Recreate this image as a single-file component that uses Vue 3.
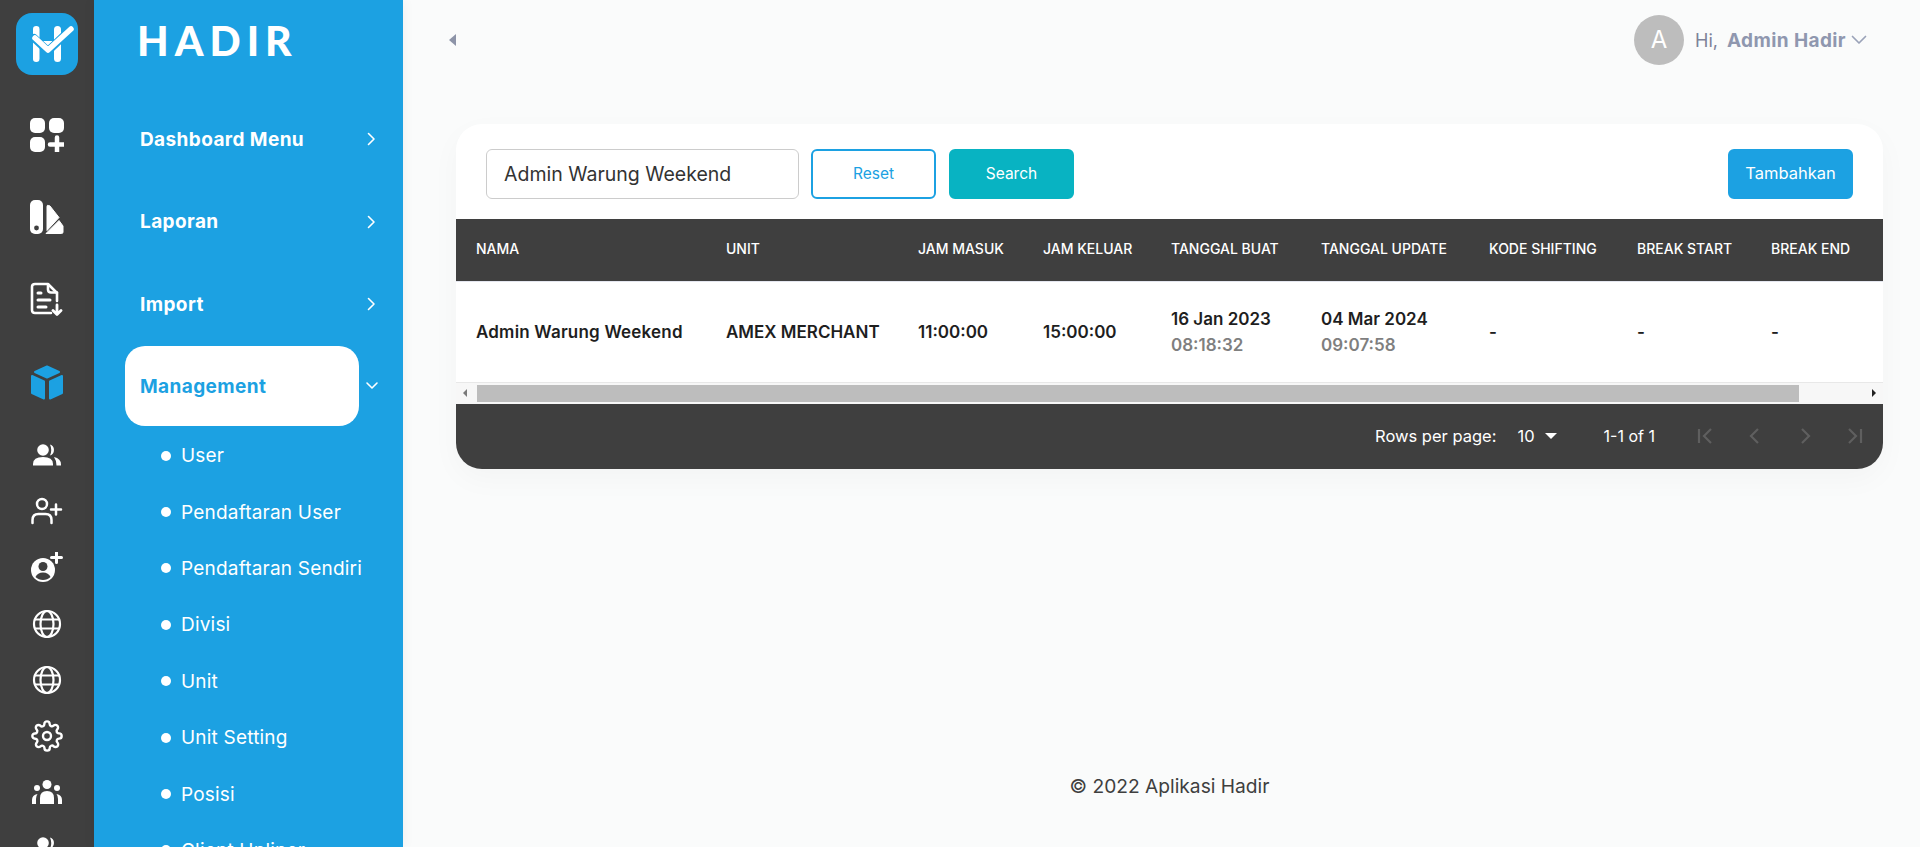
<template>
  <div class="layout">
    <nav class="rail">
      <div class="logo">
        <svg width="62" height="62" viewBox="0 0 62 62">
          <rect x="17" y="13" width="6.500" height="36" rx="3.200" fill="#fff" />
          <rect x="38" y="13" width="7" height="36" rx="3.500" fill="#fff" />
          <path d="M26 28h11l-5.500 5z" fill="#fff" />
          <path d="M18 25l14 13 23-22" fill="none" stroke="#1ca1e2" stroke-width="8" stroke-linecap="round" stroke-linejoin="round" />
          <path d="M19 25l13 12 23-21" fill="none" stroke="#fff" stroke-width="5.500" stroke-linecap="round" stroke-linejoin="round" />
        </svg>
      </div>

      <div class="rail-big">
        <svg width="34" height="34" viewBox="0 0 34 34" fill="#fff">
          <rect width="15" height="15" rx="5" />
          <rect x="19" width="15" height="15" rx="5" />
          <rect y="19" width="15" height="15" rx="5" />
          <path d="M20 26.500h14M27 19.500v14" stroke="#fff" stroke-width="4.500" stroke-linecap="round" />
        </svg>
      </div>
      <div class="rail-big">
        <svg width="34" height="34" viewBox="0 0 34 34" fill="#fff">
          <rect width="13" height="34" rx="5" />
          <circle cx="6.500" cy="28" r="2.400" fill="#3f3f3f" />
          <path d="M17 6.500q0-1.800 1.700-1L20 6l9 11.500-12 13z" stroke="#fff" stroke-linejoin="round" />
          <path d="M16 33.500l13-13 4 5.500v6q0 1.500-1.500 1.500z" stroke="#fff" stroke-linejoin="round" />
        </svg>
      </div>
      <div class="rail-big">
        <svg width="34" height="34" viewBox="0 0 34 34" fill="none" stroke="#fff" stroke-width="2.600" stroke-linecap="round" stroke-linejoin="round">
          <path d="M21 31H5q-3 0-3-3V5q0-3 3-3h13l9 9v8" />
          <path d="M18 2.500v5q0 3 3 3h6" />
          <path d="M8 11h3M8 18h12M8 25h8" stroke-width="3" />
          <path d="M27 23v9M23 28.500l4 4 4-4" stroke-width="2.800" />
        </svg>
      </div>
      <div class="rail-big">
        <svg class="cube" width="34" height="36" viewBox="0 0 34 36" fill="#1ca1e2" stroke="#1ca1e2" stroke-width="2" stroke-linejoin="round">
          <path d="M17 1.500l12 5.500-12 5.500L5 7z" />
          <path d="M2 11l12 5.500v17L2 28z" />
          <path d="M32 11l-12 5.500v17L32 28z" />
        </svg>
      </div>

      <div class="rail-small">
        <svg width="30" height="22" viewBox="0 0 30 22" fill="#fff">
          <circle cx="11" cy="6" r="5.800" />
          <path d="M1 20q0-7 10-7t10 7v1.500H1z" />
          <path d="M18 .5a5.800 5.800 0 0 1 0 11q2.500-5.500 0-11zM22 13q7 1.500 7 7.500v1h-4.500q0-5-2.500-8.500z" />
        </svg>
      </div>
      <div class="rail-small">
        <svg width="32" height="28" viewBox="0 0 32 28" fill="none" stroke="#fff" stroke-width="2.500" stroke-linecap="round">
          <circle cx="11" cy="7" r="5" />
          <path d="M1.500 26v-3q0-6 6-6h7q6 0 6 6v3" />
          <path d="M20 12.500h10M25 7.500v10" />
        </svg>
      </div>
      <div class="rail-small">
        <svg width="32" height="30" viewBox="0 0 32 30">
          <circle cx="12" cy="18" r="12" fill="#fff" />
          <circle cx="12" cy="14.500" r="4.500" fill="#3f3f3f" />
          <path d="M4.500 25q2-4.500 7.500-4.500T19.500 25q-3 3-7.500 3t-7.500-3z" fill="#3f3f3f" />
          <path d="M20.500 5.500h10M25.500 .5v10" stroke="#fff" stroke-width="3" stroke-linecap="round" />
        </svg>
      </div>
      <div v-for="n in 2" :key="n" class="rail-small">
        <svg width="30" height="30" viewBox="0 0 30 30" fill="none" stroke="#fff" stroke-width="2.200">
          <circle cx="15" cy="15" r="13" />
          <ellipse cx="15" cy="15" rx="6.500" ry="13" />
          <path d="M3 10.500h24M3 19.500h24" />
        </svg>
      </div>
      <div class="rail-small">
        <svg width="32" height="32" viewBox="0 0 24 24" fill="none" stroke="#fff" stroke-width="1.800" stroke-linejoin="round">
          <circle cx="12" cy="12" r="3" />
          <path d="M19.400 15a1.650 1.650 0 0 0 .33 1.820l.06.06a2 2 0 0 1 0 2.830 2 2 0 0 1-2.830 0l-.06-.06a1.650 1.650 0 0 0-1.820-.33 1.650 1.650 0 0 0-1 1.510V21a2 2 0 0 1-2 2 2 2 0 0 1-2-2v-.09A1.650 1.650 0 0 0 9 19.400a1.650 1.650 0 0 0-1.820.33l-.06.06a2 2 0 0 1-2.830 0 2 2 0 0 1 0-2.830l.06-.06a1.650 1.650 0 0 0 .33-1.820 1.650 1.650 0 0 0-1.510-1H3a2 2 0 0 1-2-2 2 2 0 0 1 2-2h.09A1.650 1.650 0 0 0 4.600 9a1.650 1.650 0 0 0-.33-1.820l-.06-.06a2 2 0 0 1 0-2.830 2 2 0 0 1 2.830 0l.06.06a1.650 1.650 0 0 0 1.820.33H9a1.650 1.650 0 0 0 1-1.510V3a2 2 0 0 1 2-2 2 2 0 0 1 2 2v.09a1.650 1.650 0 0 0 1 1.510 1.650 1.650 0 0 0 1.820-.33l.06-.06a2 2 0 0 1 2.830 0 2 2 0 0 1 0 2.830l-.06.06a1.650 1.650 0 0 0-.33 1.820V9a1.650 1.650 0 0 0 1.510 1H21a2 2 0 0 1 2 2 2 2 0 0 1-2 2h-.09a1.650 1.650 0 0 0-1.510 1z" />
        </svg>
      </div>
      <div class="rail-small">
        <svg width="30" height="24" viewBox="0 0 30 24" fill="#fff">
          <circle cx="15" cy="4.500" r="4.500" />
          <circle cx="5" cy="8" r="3" />
          <circle cx="25" cy="8" r="3" />
          <path d="M8 24v-6q0-7 7-7t7 7v6z" />
          <path d="M0 24v-4q0-5 5.500-6-1.500 2-1.500 5v5zM30 24v-4q0-5-5.500-6 1.500 2 1.500 5v5z" />
        </svg>
      </div>
      <div class="rail-small">
        <svg width="30" height="22" viewBox="0 0 30 22" fill="#fff">
          <circle cx="11" cy="6" r="5.800" />
          <path d="M1 20q0-7 10-7t10 7v1.500H1z" />
          <path d="M18 .5a5.800 5.800 0 0 1 0 11q2.500-5.500 0-11z" />
        </svg>
      </div>
    </nav>

    <aside class="sidebar">
      <div class="brand">HADIR</div>
      <div v-for="item in menu" :key="item" class="menu-item">
        <span>{{ item }}</span>
        <svg class="chev" width="10" height="14" viewBox="0 0 10 14" fill="none" stroke="#fff" stroke-width="1.600" stroke-linecap="round" stroke-linejoin="round">
          <path d="M2.500 1.500L8 7l-5.500 5.500" />
        </svg>
      </div>
      <div class="menu-open">
        <div class="menu-active">Management</div>
        <svg width="14" height="10" viewBox="0 0 14 10" fill="none" stroke="#fff" stroke-width="1.600" stroke-linecap="round" stroke-linejoin="round">
          <path d="M2 2l5 5 5-5" />
        </svg>
      </div>
      <ul class="submenu">
        <li v-for="sub in submenu" :key="sub"><i class="dot"></i>{{ sub }}</li>
      </ul>
    </aside>

    <div class="main">
      <header class="topbar">
        <span class="toggle"></span>
        <div class="user">
          <span class="avatar">A</span>
          <span class="hi">Hi,</span>
          <span class="uname">Admin Hadir</span>
          <svg width="16" height="10" viewBox="0 0 16 10" fill="none" stroke="#9aa2b8" stroke-width="1.700" stroke-linecap="round" stroke-linejoin="round">
            <path d="M1.500 1.500L8 8l6.500-6.500" />
          </svg>
        </div>
      </header>

      <section class="card">
        <div class="filters">
          <input class="search-input" type="text" value="Admin Warung Weekend" />
          <button class="btn btn-reset" type="button">Reset</button>
          <button class="btn btn-search" type="button">Search</button>
          <button class="btn btn-add" type="button">Tambahkan</button>
        </div>

        <div class="table-wrap">
          <table>
            <colgroup>
              <col v-for="c in columns" :key="c.label" :style="{ width: c.width + 'px' }" />
            </colgroup>
            <thead>
              <tr>
                <th v-for="c in columns" :key="c.label">{{ c.label }}</th>
              </tr>
            </thead>
            <tbody>
              <tr>
                <td>Admin Warung Weekend</td>
                <td>AMEX MERCHANT</td>
                <td>11:00:00</td>
                <td>15:00:00</td>
                <td>16 Jan 2023<small>08:18:32</small></td>
                <td>04 Mar 2024<small>09:07:58</small></td>
                <td>-</td>
                <td>-</td>
                <td>-</td>
              </tr>
            </tbody>
          </table>
        </div>

        <div class="scrollbar">
          <span class="arrow arrow-left"></span>
          <div class="thumb"></div>
          <span class="arrow arrow-right"></span>
        </div>

        <div class="pager">
          <span>Rows per page:</span>
          <span class="per-page">10<i class="caret"></i></span>
          <span class="range">1-1 of 1</span>
          <div class="pager-btns">
            <svg v-for="p in pagerIcons" :key="p" width="24" height="24" viewBox="0 0 24 24" fill="none" stroke="#5f5f5f" stroke-width="2.200">
              <path :d="p" />
            </svg>
          </div>
        </div>
      </section>

      <footer class="foot">© 2022 Aplikasi Hadir</footer>
    </div>
  </div>
</template>

<script setup>
const menu = ['Dashboard Menu', 'Laporan', 'Import']
const submenu = ['User', 'Pendaftaran User', 'Pendaftaran Sendiri', 'Divisi', 'Unit', 'Unit Setting', 'Posisi', 'Client Upliner']

const columns = [
  { label: 'Nama', width: 250 },
  { label: 'Unit', width: 192 },
  { label: 'Jam Masuk', width: 125 },
  { label: 'Jam Keluar', width: 128 },
  { label: 'Tanggal Buat', width: 150 },
  { label: 'Tanggal Update', width: 168 },
  { label: 'Kode Shifting', width: 148 },
  { label: 'Break Start', width: 134 },
  { label: 'Break End', width: 200 }
]

const pagerIcons = [
  'M6 5v14M18 5l-7 7 7 7',
  'M15 5l-7 7 7 7',
  'M9 5l7 7-7 7',
  'M6 5l7 7-7 7M18 5v14'
]
</script>

<style>
html, body {
  margin: 0;
  height: 100%;
  overflow: hidden;
}
</style>

<style scoped>
.layout {
  display: flex;
  height: 847px;
  overflow: hidden;
  background: #fafbfb;
  font-family: Inter, "Noto Sans", sans-serif;
  color: #1e1e1e;
}

.rail {
  width: 94px;
  flex-shrink: 0;
  background: #3f3f3f;
  display: flex;
  flex-direction: column;
  align-items: center;
  overflow: hidden;
}

.logo {
  width: 62px;
  height: 62px;
  margin: 13px 0 19px;
  flex-shrink: 0;
  border-radius: 16px;
  background: #1ca1e2;
}

.logo svg {
  display: block;
}

.rail-big,
.rail-small {
  flex-shrink: 0;
  display: flex;
  align-items: center;
  justify-content: center;
}

.rail-big {
  height: 82px;
}

.cube {
  margin-top: 4px;
}

.rail-small {
  height: 56.2px;
}

.rail-big + .rail-small {
  margin-top: 5px;
}

.sidebar {
  width: 309px;
  flex-shrink: 0;
  background: #1ca1e2;
  color: #fff;
  overflow: hidden;
  box-shadow: 0 0 12px rgba(0, 0, 0, 0.06);
}

.brand {
  height: 98px;
  padding: 13px 0 0 43px;
  box-sizing: border-box;
  font-family: Lato, sans-serif;
  font-size: 41px;
  line-height: 56px;
  font-weight: 900;
  letter-spacing: 6px;
}

.menu-item {
  height: 82.5px;
  display: flex;
  align-items: center;
  justify-content: space-between;
  padding: 0 27px 0 46px;
  font-size: 19px;
  font-weight: 700;
  letter-spacing: 0.4px;
}

.menu-open {
  display: flex;
  align-items: center;
  gap: 6px;
  padding-left: 31px;
}

.menu-active {
  width: 234px;
  height: 80px;
  display: flex;
  align-items: center;
  box-sizing: border-box;
  padding: 1px 0 0 15px;
  border-radius: 20px;
  background: #fff;
  color: #1ca1e2;
  font-size: 19px;
  font-weight: 700;
  letter-spacing: 0.4px;
}

.submenu {
  list-style: none;
  margin: 2px 0 0;
  padding: 0 0 0 67px;
  font-size: 19px;
  letter-spacing: 0.2px;
}

.submenu li {
  height: 56.4px;
  display: flex;
  align-items: center;
  white-space: nowrap;
}

.dot {
  width: 10px;
  height: 10px;
  margin-right: 10px;
  border-radius: 50%;
  background: #fff;
}

.main {
  flex: 1;
  min-width: 0;
  display: flex;
  flex-direction: column;
}

.topbar {
  height: 124px;
  flex-shrink: 0;
  display: flex;
  justify-content: space-between;
  box-sizing: border-box;
  padding: 15px 53px 0 46px;
}

.toggle {
  width: 0;
  height: 0;
  margin-top: 19px;
  border-style: solid;
  border-width: 6px 7px 6px 0;
  border-color: transparent #8d94a8 transparent transparent;
}

.user {
  display: flex;
  align-items: center;
  height: 50px;
  font-size: 18px;
}

.avatar {
  width: 50px;
  height: 50px;
  margin-right: 11px;
  border-radius: 50%;
  background: #bdbdbd;
  color: #fff;
  font-size: 24px;
  line-height: 50px;
  text-align: center;
}

.hi {
  color: #7e8299;
  margin-right: 9px;
}

.uname {
  color: #8f97af;
  font-size: 19px;
  font-weight: 700;
  letter-spacing: 0.4px;
  margin-right: 5px;
}

.card {
  margin: 0 37px 0 53px;
  flex-shrink: 0;
  border-radius: 26px;
  background: #fff;
  overflow: hidden;
  box-shadow: 0 10px 30px rgba(0, 0, 0, 0.03);
}

.filters {
  height: 95px;
  display: flex;
  align-items: flex-start;
  box-sizing: border-box;
  padding: 25px 30px 0;
}

.search-input {
  width: 313px;
  height: 50px;
  box-sizing: border-box;
  padding: 0 17px;
  border: 1px solid #ccc;
  border-radius: 6px;
  outline: none;
  font-family: inherit;
  font-size: 19.500px;
  color: #333;
}

.btn {
  height: 50px;
  padding: 0 0 2px;
  border-radius: 6px;
  border: 2px solid #1ca1e2;
  font-family: inherit;
  font-size: 15.500px;
  cursor: pointer;
}

.btn-reset {
  width: 125px;
  margin-left: 12px;
  background: #fff;
  color: #1ca1e2;
}

.btn-search {
  width: 125px;
  margin-left: 13px;
  background: #08b3c2;
  border-color: #08b3c2;
  color: #fff;
}

.btn-add {
  width: 125px;
  margin-left: auto;
  background: #1ca1e2;
  color: #fff;
  font-size: 16.500px;
}

.table-wrap {
  overflow: hidden;
}

table {
  width: 1495px;
  table-layout: fixed;
  border-collapse: collapse;
}

th {
  height: 62px;
  padding: 0 0 2px 20px;
  box-sizing: border-box;
  background: #3f3f3f;
  color: #fff;
  font-size: 14px;
  font-weight: 500;
  text-align: left;
  text-transform: uppercase;
  white-space: nowrap;
}

td {
  height: 100px;
  padding: 0 0 0 20px;
  border-top: 1px solid #e4e6ef;
  font-size: 17px;
  font-weight: 600;
  white-space: nowrap;
}

td:first-child {
  letter-spacing: 0.2px;
}

td small {
  display: block;
  margin-top: 6px;
  color: #7f7f7f;
  font-size: 17px;
  font-weight: 600;
}

.scrollbar {
  height: 22px;
  display: flex;
  align-items: center;
  box-sizing: border-box;
  border-top: 1px solid #e8e8e8;
  background: #f7f7f7;
}

.arrow {
  width: 0;
  height: 0;
  border-style: solid;
  border-color: transparent;
}

.arrow-left {
  margin-left: 7px;
  border-width: 4px 4px 4px 0;
  border-right-color: #7a7a7a;
}

.arrow-right {
  margin-left: auto;
  margin-right: 7px;
  border-width: 4px 0 4px 4px;
  border-left-color: #222;
}

.thumb {
  width: 1322px;
  height: 17px;
  margin-left: 10px;
  background: #bdbdbd;
}

.pager {
  height: 65px;
  display: flex;
  align-items: center;
  justify-content: flex-end;
  box-sizing: border-box;
  padding-right: 16px;
  background: #3f3f3f;
  color: #fff;
  font-size: 16.500px;
}

.per-page {
  display: flex;
  align-items: center;
  margin-left: 21px;
}

.caret {
  width: 0;
  height: 0;
  margin-left: 10px;
  border-style: solid;
  border-width: 6px 6.500px 0;
  border-color: #fff transparent transparent;
}

.range {
  margin-left: 47px;
  font-size: 16px;
}

.pager-btns {
  display: flex;
  gap: 26px;
  margin-left: 38px;
}

.foot {
  margin-top: 305px;
  padding-left: 16px;
  text-align: center;
  font-size: 19.200px;
  line-height: 24px;
  color: #3f3f3f;
}
</style>
